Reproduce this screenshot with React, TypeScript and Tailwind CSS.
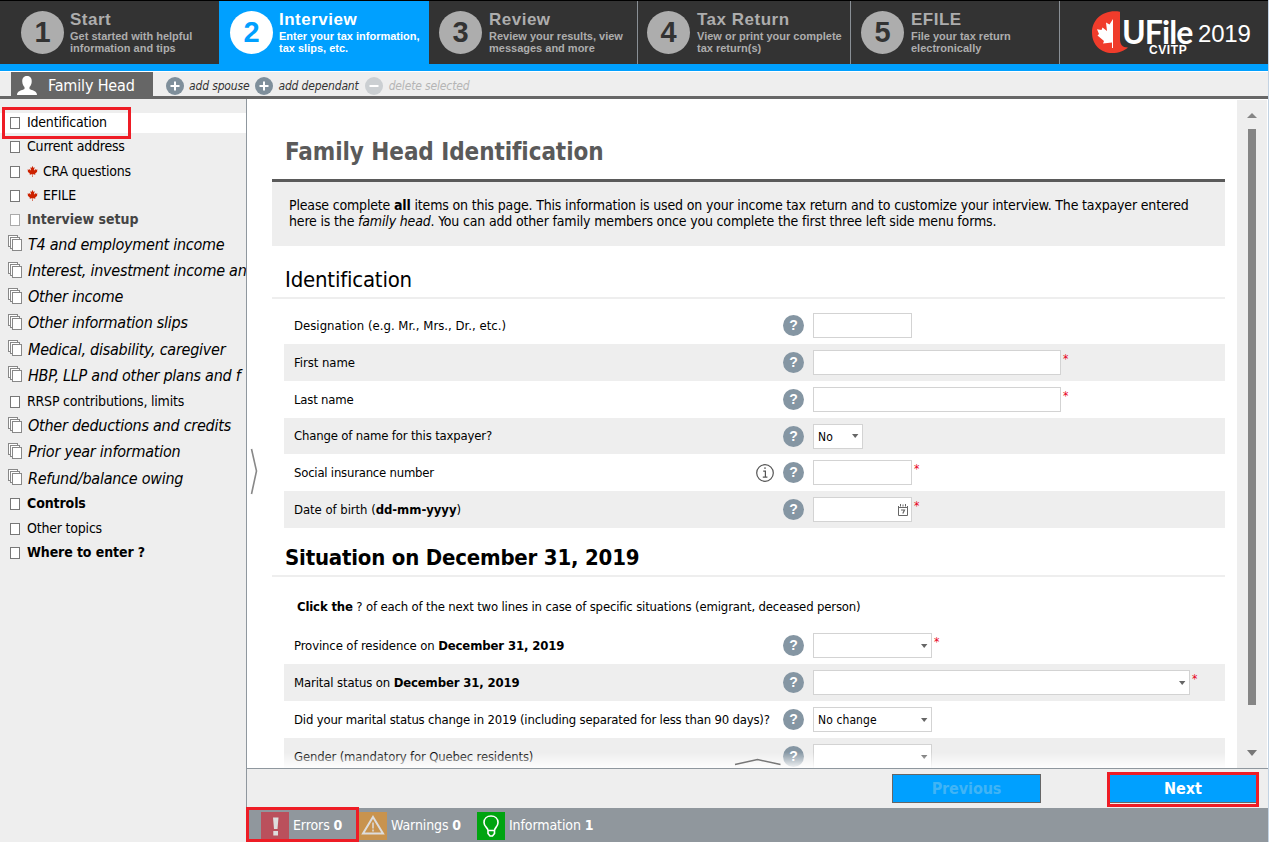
import React from "react";
import { FaCanadianMapleLeaf } from "react-icons/fa";

const steps = [
  { n: "1", title: "Start", lines: ["Get started with helpful", "information and tips"], box: "w-[219px] pl-[21px]", text: "ml-[6px]" },
  { n: "2", title: "Interview", lines: ["Enter your tax information,", "tax slips, etc."], box: "w-[210px] pl-[11px]", text: "ml-[6px]", active: true },
  { n: "3", title: "Review", lines: ["Review your results, view", "messages and more"], box: "w-[209px] pl-[10px] border-r", text: "ml-[7px]" },
  { n: "4", title: "Tax Return", lines: ["View or print your complete", "tax return(s)"], box: "w-[213px] pl-[9px] border-r", text: "ml-[7px]" },
  { n: "5", title: "EFILE", lines: ["File your tax return", "electronically"], box: "w-[209px] pl-[10px] border-r", text: "ml-[7px]" },
];

type Kind = "plain" | "leaf" | "muted" | "group" | "bold";
const menu: { label: string; kind: Kind; selected?: boolean }[] = [
  { label: "Identification", kind: "plain", selected: true },
  { label: "Current address", kind: "plain" },
  { label: "CRA questions", kind: "leaf" },
  { label: "EFILE", kind: "leaf" },
  { label: "Interview setup", kind: "muted" },
  { label: "T4 and employment income", kind: "group" },
  { label: "Interest, investment income an", kind: "group" },
  { label: "Other income", kind: "group" },
  { label: "Other information slips", kind: "group" },
  { label: "Medical, disability, caregiver", kind: "group" },
  { label: "HBP, LLP and other plans and f", kind: "group" },
  { label: "RRSP contributions, limits", kind: "plain" },
  { label: "Other deductions and credits", kind: "group" },
  { label: "Prior year information", kind: "group" },
  { label: "Refund/balance owing", kind: "group" },
  { label: "Controls", kind: "bold" },
  { label: "Other topics", kind: "plain" },
  { label: "Where to enter ?", kind: "bold" },
];

const labelStyle: Record<Kind, string> = {
  plain: "pl-[27px] text-[14px] tracking-[-0.2px] h-[20px]",
  leaf: "pl-[27px] text-[14px] tracking-[-0.2px] h-[20px]",
  muted: "pl-[27px] text-[14px] font-bold text-[#444] h-[20px]",
  bold: "pl-[27px] text-[14px] font-bold tracking-[-0.1px] h-[20px]",
  group: "pl-[28px] text-[16px] italic tracking-[-0.25px] h-[24px]",
};

function StackIcon() {
  return (
    <svg width="15" height="17" viewBox="0 0 15 17" fill="#fff" stroke="#888" shapeRendering="crispEdges">
      <rect x="0.5" y="0.5" width="9" height="11" />
      <rect x="2.5" y="2.5" width="9" height="11" />
      <rect x="4.5" y="4.5" width="9" height="11" />
    </svg>
  );
}

function MenuItem({ item }: { item: (typeof menu)[number] }) {
  const group = item.kind === "group";
  return (
    <li className={`flex items-center ${group ? "h-[26.2px]" : "h-[24.25px]"}`}>
      <div className={`relative flex w-full items-center whitespace-nowrap ${labelStyle[item.kind]} ${item.selected ? "bg-white" : ""}`}>
        {group ? (
          <span className="absolute top-[2px] left-[8px]"><StackIcon /></span>
        ) : (
          <span className={`absolute top-[4px] left-[10px] h-[12px] w-[10px] border bg-white ${item.kind === "muted" ? "border-[#aaa]" : "border-[#777]"}`} />
        )}
        {item.kind === "leaf" && <FaCanadianMapleLeaf className="mr-[5px] h-[11px] w-[11px] text-[#cc2200]" />}
        <span className="-mt-px">{item.label}</span>
      </div>
    </li>
  );
}

function Help() {
  return (
    <span className="flex h-[21px] w-[21px] items-center justify-center rounded-full bg-[#8596a3]">
      <span className="font-['Liberation_Sans',sans-serif] text-[14px] leading-[21px] font-bold text-white">?</span>
    </span>
  );
}

function InfoMark() {
  return (
    <svg width="18" height="18" viewBox="0 0 18 18" fill="none" stroke="#555" strokeWidth="1.2">
      <circle cx="9" cy="9" r="8.3" />
      <path d="M9 3.2v1.8M7.2 7.2H9.4V13M6.8 13.2H11.4" />
    </svg>
  );
}

function Caret() {
  return <svg width="7" height="4" viewBox="0 0 7 4"><path d="M0 0h6.4L3.2 4z" fill="#666" /></svg>;
}

function Calendar() {
  return (
    <svg width="10" height="12" viewBox="0 0 10 12" fill="none" stroke="#666">
      <path d="M0.5 2v9.500h9V2M0.500 3.500h9M2.500 0v2.500M5 0.500v2M7.500 0v2.500" />
      <path d="M3 6h3.500L4.800 9.600" strokeWidth="1.200" />
    </svg>
  );
}

type RowProps = {
  label: React.ReactNode;
  field: string;
  kind?: "input" | "select" | "date";
  value?: string;
  required?: boolean;
  shaded?: boolean;
  info?: boolean;
  height?: string;
  labelClass?: string;
};

function Row({ label, field, kind = "input", value, required, shaded, info, height = "h-[37px]", labelClass = "tracking-[-0.05px]" }: RowProps) {
  return (
    <div className={`flex shrink-0 items-center ${height} ${shaded ? "bg-[#eee]" : ""}`}>
      <div className={`w-[472px] pl-[10px] text-[13px] whitespace-nowrap ${labelClass}`}>{label}</div>
      <div className="w-[27px]">{info && <InfoMark />}</div>
      <Help />
      <div className={`ml-[9px] flex h-[25px] items-center border border-[#d3d3d3] bg-white ${field}`}>
        <span className="flex-1 pt-px pl-[4px] text-[12px] tracking-[0.1px] whitespace-nowrap">{value}</span>
        {kind === "select" && <span className="mr-[3px]"><Caret /></span>}
        {kind === "date" && <span className="mr-[3px]"><Calendar /></span>}
      </div>
      {required && <span className="-mt-[7px] ml-[2px] text-[12px] leading-[15px] text-[#e8001c]">*</span>}
    </div>
  );
}

function Step({ step }: { step: (typeof steps)[number] }) {
  return (
    <div className={`flex shrink-0 border-[#8a9096] ${step.box} ${step.active ? "bg-[#00a0ff] text-white" : "text-[#adadad]"}`}>
      <div className={`mt-[10px] flex h-[43px] w-[43px] items-center justify-center rounded-full text-[29px] leading-none font-bold ${step.active ? "bg-white text-[#00a0ff]" : "bg-[#adadad] text-[#333]"}`}>
        {step.n}
      </div>
      <div className={`mt-[9px] font-bold whitespace-nowrap ${step.text}`}>
        <div className="text-[17px] leading-[19px] tracking-[0.5px]">{step.title}</div>
        <div className="mt-px text-[11px] leading-[12px]">
          {step.lines.map((l) => <div key={l}>{l}</div>)}
        </div>
      </div>
    </div>
  );
}

function Logo() {
  return (
    <div className="flex flex-1 items-start pl-[32px] text-white">
      <svg width="36" height="43" viewBox="0 0 36 43" className="mt-[10px]">
        <path d="M28 .8C12 -2 0 8 0 21.500C0 34 9 42 20 42C27 42 32 40 36 36.500C30 36.500 28 33 28 28Z" fill="#f03c2b" />
        <path d="M21 8L17.500 13.500L14 11.500L15 20L10.500 16.500L9.500 19L5 18.300L7 23L5.500 24.500L12 30L11 32.500L20 31.500V37H21Z" fill="#fff" />
      </svg>
      <div className="-ml-[6px] mt-[18px] flex w-[70px] flex-col">
        <div className="font-['Lato',sans-serif] text-[32px] leading-[26px] font-bold tracking-[-0.9px]">UFile</div>
        <div className="pl-[27px] text-[12px] leading-[11px] font-bold tracking-[0.6px]">CVITP</div>
      </div>
      <div className="mt-[19px] ml-[6px] text-[24px] leading-[28px] tracking-[-0.2px]">2019</div>
    </div>
  );
}

function MemberAction({ label, sign, disabled, gap }: { label: string; sign: "+" | "-"; disabled?: boolean; gap: string }) {
  return (
    <div className={`flex items-center ${gap} ${disabled ? "text-[#b5b5b5]" : "text-[#333]"}`}>
      <svg width="18" height="18" viewBox="0 0 18 18" className="shrink-0">
        <circle cx="9" cy="9" r="9" fill={disabled ? "#cbcfd2" : "#7f8f9b"} />
        <path d={sign === "+" ? "M4.500 9h9M9 4.500v9" : "M4.500 9h9"} stroke="#fff" strokeWidth="2" />
      </svg>
      <span className="whitespace-nowrap">{label}</span>
    </div>
  );
}

export default function App() {
  return (
    <div className="relative flex h-[842px] w-[1269px] flex-col overflow-hidden border-r border-[#c3d3e3] bg-white font-['DejaVu_Sans_Condensed','DejaVu_Sans',sans-serif] text-black font-stretch-condensed">
      <header className="flex h-[64px] shrink-0 border-t border-black bg-[#333] font-['Liberation_Sans',sans-serif] font-stretch-normal">
        {steps.map((s) => <Step key={s.n} step={s} />)}
        <Logo />
      </header>
      <div className="h-[7px] shrink-0 bg-[#00a0ff]" />
      <div className="mt-px flex h-[27px] shrink-0 border-b-[3px] border-[#666] bg-[#eee]">
        <div className="ml-[11px] flex w-[142px] items-end bg-[#666] text-white">
          <svg width="20" height="19" viewBox="0 0 20 19" className="mb-[1px] ml-[6px]" fill="#fff">
            <path d="M10 0C6.500 0 5 2.500 5.300 6C5.500 8.500 6.500 10 7.500 11V13C5 14.500 0 14.500 0 19H20C20 14.500 15 14.500 12.500 13V11C13.500 10 14.500 8.500 14.700 6C15 2.500 13.500 0 10 0Z" />
          </svg>
          <span className="ml-[11px] text-[16px] leading-[20px] tracking-[-0.15px] whitespace-nowrap">Family Head</span>
        </div>
        <div className="ml-[13px] flex items-center gap-[6px] pt-[3px] text-[12px] tracking-[-0.15px] italic">
          <MemberAction label="add spouse" sign="+" gap="gap-[5px]" />
          <MemberAction label="add dependant" sign="+" gap="gap-[5px]" />
          <MemberAction label="delete selected" sign="-" gap="gap-[6px]" disabled />
        </div>
      </div>

      <div className="flex min-h-0 flex-1">
        <aside className="relative w-[246px] shrink-0 overflow-hidden bg-[#eee] pt-[12px]">
          <ul>{menu.map((m) => <MenuItem key={m.label} item={m} />)}</ul>
          <div className="absolute top-[8px] left-[2px] h-[32px] w-[129px] border-[3px] border-[#ee1c25]" />
        </aside>

        <div className="flex min-w-0 flex-1 flex-col">
          <div className="relative flex h-[669px] shrink-0 border-l border-[#8f979e]">
            <main className="flex min-w-0 flex-1 flex-col overflow-hidden pl-[25px] pr-[12px]">
              <h1 className="mt-[37px] h-[43px] shrink-0 pl-[13px] text-[24px] leading-[32px] font-bold tracking-[-0.07px] text-[#5a5a5a]">Family Head Identification</h1>
              <div className="h-[67px] shrink-0 border-t-[3px] border-[#5a5a5a] bg-[#eee] pt-[15px] pl-[17px] text-[14px] leading-[16px] tracking-[-0.17px] whitespace-nowrap">
                Please complete <b>all</b> items on this page. This information is used on your income tax return and to customize your interview. The taxpayer entered<br />
                here is the <i>family head</i>. You can add other family members once you complete the first three left side menu forms.
              </div>
              <h2 className="mt-[20px] h-[33px] shrink-0 border-b-2 border-[#eee] pl-[13px] text-[22px] leading-[28px] tracking-[-0.2px]">Identification</h2>
              <section className="mt-[8px] flex shrink-0 flex-col pl-[12px]">
                <Row label="Designation (e.g. Mr., Mrs., Dr., etc.)" field="w-[99px]" labelClass="tracking-[0.02px]" />
                <Row label="First name" field="w-[248px]" required shaded />
                <Row label="Last name" field="w-[248px]" labelClass="tracking-[-0.2px]" required />
                <Row label="Change of name for this taxpayer?" field="w-[50px]" kind="select" value="No" labelClass="tracking-[-0.17px]" shaded height="h-[36px]" />
                <Row label="Social insurance number" field="w-[99px]" labelClass="tracking-[-0.22px]" info required />
                <Row label={<>Date of birth (<b>dd-mm-yyyy</b>)</>} field="w-[99px]" kind="date" required shaded />
              </section>
              <h2 className="mt-[16px] h-[33px] shrink-0 border-b-2 border-[#eee] pl-[13px] text-[22px] leading-[28px] font-bold tracking-[-0.2px]">Situation on December 31, 2019</h2>
              <p className="mt-[20px] h-[30px] shrink-0 pl-[25px] text-[13px] leading-[20px] tracking-[-0.16px] whitespace-nowrap"><b>Click the</b> ? of each of the next two lines in case of specific situations (emigrant, deceased person)</p>
              <section className="flex shrink-0 flex-col pl-[12px]">
                <Row label={<>Province of residence on <b>December 31, 2019</b></>} field="w-[119px]" kind="select" labelClass="tracking-[-0.12px]" required />
                <Row label={<>Marital status on <b>December 31, 2019</b></>} field="w-[377px]" kind="select" labelClass="tracking-[-0.13px]" required shaded />
                <Row label="Did your marital status change in 2019 (including separated for less than 90 days)?" field="w-[119px]" kind="select" value="No change" labelClass="tracking-[-0.18px]" />
                <Row label="Gender (mandatory for Quebec residents)" field="w-[119px]" kind="select" labelClass="tracking-[-0.17px]" shaded />
              </section>
            </main>
            <div className="mt-px mr-px flex w-[30px] shrink-0 flex-col items-center bg-[#eee]">
              <svg width="10" height="5" viewBox="0 0 10 5" className="mt-[13px]"><path d="M0 5L5 0L10 5Z" fill="#858585" /></svg>
              <div className="mt-[11px] h-[576px] w-[8px] bg-[#858585]" />
              <svg width="10" height="6" viewBox="0 0 10 6" className="mt-[45px]"><path d="M0 0L5 6L10 0Z" fill="#777" /></svg>
            </div>
            <div className="absolute bottom-0 left-0 h-[16px] w-[990px] bg-gradient-to-b from-white/0 to-white/90" />
            <svg width="8" height="48" viewBox="0 0 8 48" className="absolute top-[349px] left-[3px]" fill="none" stroke="#888" strokeWidth="1.6"><path d="M1.500 1L6.500 23L1.500 46" /></svg>
            <svg width="48" height="8" viewBox="0 0 48 8" className="absolute top-[659px] left-[487px]" fill="none" stroke="#777" strokeWidth="1.5"><path d="M1 6.500L23.500 1.500L46.500 6.500" /></svg>
          </div>

          <div className="flex h-[40px] shrink-0 items-start justify-end gap-[68px] border-t border-l border-[#8f979e] bg-[#eee] pt-[5px] pr-[11px] text-[16px] font-bold">
            <button className="h-[29px] w-[149px] border border-[#666] bg-[#00a0ff] leading-[28px] tracking-[-0.1px] text-[#40b4f5]">Previous</button>
            <div className="relative">
              <button className="h-[29px] w-[148px] border border-[#666] bg-[#00a0ff] leading-[28px] text-white">Next</button>
              <div className="absolute -top-[2px] -left-[2px] h-[35px] w-[152px] border-[3px] border-[#ee1c25]" />
            </div>
          </div>

          <footer className="relative flex min-h-0 flex-1 items-center bg-[#90979d] pt-px pl-[15px] text-[14px] tracking-[-0.1px] text-white">
            <svg width="28" height="28" viewBox="0 0 28 28"><rect width="28" height="28" fill="#ba505c" /><path d="M12 5.500h5.500L16.500 17h-3.500zM12.300 19h4.700v4.500h-4.700z" fill="#ddd" /></svg>
            <span className="ml-[4px] w-[66px] whitespace-nowrap">Errors <b>0</b></span>
            <svg width="28" height="28" viewBox="0 0 28 28"><rect width="28" height="28" fill="#c8934e" /><path d="M14 5L24 21.500H4Z" fill="none" stroke="#ddd" strokeWidth="2" /><path d="M14 10.500v6M14 17.500v2" stroke="#ddd" strokeWidth="1.500" /></svg>
            <span className="ml-[4px] w-[86px] whitespace-nowrap">Warnings <b>0</b></span>
            <svg width="28" height="28" viewBox="0 0 28 28"><rect width="28" height="28" fill="#00a410" /><path d="M11 18.500C11 15.500 7 15 7 10.500C7 6.500 10 4 14 4C18 4 21 6.500 21 10.500C21 15 17.500 15.500 17.500 18.500ZM11 18.500V21.500L13 24H15.500L17.500 21.500V18.500" fill="none" stroke="#fff" strokeWidth="1.600" /></svg>
            <span className="ml-[4px] whitespace-nowrap">Information <b>1</b></span>
            <div className="absolute -top-px left-0 h-[35px] w-[113px] border-[3px] border-[#ee1c25]" />
          </footer>
        </div>
      </div>
    </div>
  );
}
